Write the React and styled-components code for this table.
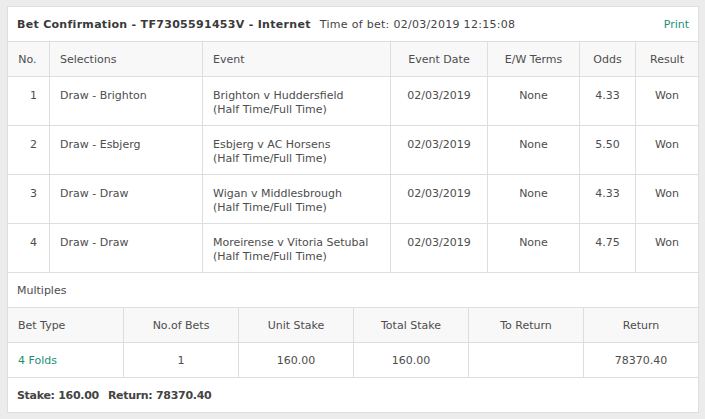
import React from 'react';
import styled, { createGlobalStyle } from 'styled-components';

const GlobalStyle = createGlobalStyle`
  html, body {
    margin: 0;
    padding: 0;
    background: #ececec;
  }
  body {
    font-family: "DejaVu Sans", Verdana, sans-serif;
    font-size: 11px;
    color: #4d4d4d;
  }
`;

const selections = [
  { no: 1, sel: 'Draw - Brighton', event: 'Brighton v Huddersfield', odds: '4.33' },
  { no: 2, sel: 'Draw - Esbjerg', event: 'Esbjerg v AC Horsens', odds: '5.50' },
  { no: 3, sel: 'Draw - Draw', event: 'Wigan v Middlesbrough', odds: '4.33' },
  { no: 4, sel: 'Draw - Draw', event: 'Moreirense v Vitoria Setubal', odds: '4.75' },
];

const App = () => {
  return (
    <StyledPage>
      <GlobalStyle />
      <StyledCard>
        <StyledTitleBar>
          <StyledTitle>
            <strong>Bet Confirmation - TF7305591453V - Internet</strong>
            <span>Time of bet: 02/03/2019 12:15:08</span>
          </StyledTitle>
          <StyledLink href="#">Print</StyledLink>
        </StyledTitleBar>

        <StyledSelRow $head>
          <StyledCell $align="center">No.</StyledCell>
          <StyledCell>Selections</StyledCell>
          <StyledCell>Event</StyledCell>
          <StyledCell $align="center">Event Date</StyledCell>
          <StyledCell $align="center">E/W Terms</StyledCell>
          <StyledCell $align="center">Odds</StyledCell>
          <StyledCell $align="center">Result</StyledCell>
        </StyledSelRow>
        {selections.map((s) => (
          <StyledSelRow key={s.no}>
            <StyledCell $align="right">{s.no}</StyledCell>
            <StyledCell>{s.sel}</StyledCell>
            <StyledCell>
              {s.event}
              <br />
              (Half Time/Full Time)
            </StyledCell>
            <StyledCell $align="center">02/03/2019</StyledCell>
            <StyledCell $align="center">None</StyledCell>
            <StyledCell $align="center">{s.odds}</StyledCell>
            <StyledCell $align="center">Won</StyledCell>
          </StyledSelRow>
        ))}

        <StyledSection>Multiples</StyledSection>

        <StyledMultiRow $head>
          <StyledCell>Bet Type</StyledCell>
          <StyledCell $align="center">No.of Bets</StyledCell>
          <StyledCell $align="center">Unit Stake</StyledCell>
          <StyledCell $align="center">Total Stake</StyledCell>
          <StyledCell $align="center">To Return</StyledCell>
          <StyledCell $align="center">Return</StyledCell>
        </StyledMultiRow>
        <StyledMultiRow>
          <StyledCell>
            <StyledLink href="#">4 Folds</StyledLink>
          </StyledCell>
          <StyledCell $align="center">1</StyledCell>
          <StyledCell $align="center">160.00</StyledCell>
          <StyledCell $align="center">160.00</StyledCell>
          <StyledCell $align="center"></StyledCell>
          <StyledCell $align="center">78370.40</StyledCell>
        </StyledMultiRow>

        <StyledFooter>
          <span>Stake: 160.00</span>
          <span>Return: 78370.40</span>
        </StyledFooter>
      </StyledCard>
    </StyledPage>
  );
};

const StyledPage = styled.div`
  padding: 6px 6px 7px 7px;
`;

const StyledCard = styled.div`
  box-sizing: border-box;
  width: 692px;
  background: #fff;
  border: 1px solid #dedede;
`;

const StyledTitleBar = styled.div`
  height: 34px;
  display: flex;
  align-items: center;
  justify-content: space-between;
  padding: 0 9px;
  border-bottom: 1px solid #dedede;
`;

const StyledTitle = styled.div`
  font-size: 11px;
  color: #444;
  letter-spacing: 0.3px;
  strong {
    color: #3a3a3a;
    margin-right: 9px;
  }
`;

const StyledLink = styled.a`
  color: #1b8f74;
  text-decoration: none;
`;

const StyledRow = styled.div`
  display: grid;
  border-bottom: 1px solid #dedede;
  background: ${(p) => (p.$head ? '#f8f8f8' : '#fff')};
`;

const StyledCell = styled.div`
  box-sizing: border-box;
  padding: 0 10px;
  line-height: 14px;
  text-align: ${(p) => p.$align || 'left'};
  border-right: 1px solid #dedede;
  white-space: nowrap;
  &:last-child {
    border-right: none;
  }
`;

const StyledSelRow = styled(StyledRow)`
  grid-template-columns: 42px 153px 188px 97px 92px 56px 1fr;
  height: ${(p) => (p.$head ? '34px' : '48px')};
  ${StyledCell} {
    padding-top: ${(p) => (p.$head ? '11px' : '12px')};
  }
  ${StyledCell}:first-child {
    padding-right: 12px;
  }
`;

const StyledMultiRow = styled(StyledRow)`
  grid-template-columns: 116px 115px 115px 115px 115px 1fr;
  height: 34px;
  ${StyledCell} {
    padding-top: 11px;
  }
`;

const StyledSection = styled.div`
  height: 34px;
  display: flex;
  align-items: center;
  padding: 0 9px;
  border-bottom: 1px solid #dedede;
`;

const StyledFooter = styled.div`
  height: 34px;
  display: flex;
  align-items: center;
  gap: 9px;
  padding: 0 9px;
  font-weight: bold;
  letter-spacing: -0.3px;
  color: #444;
`;

export default App;
